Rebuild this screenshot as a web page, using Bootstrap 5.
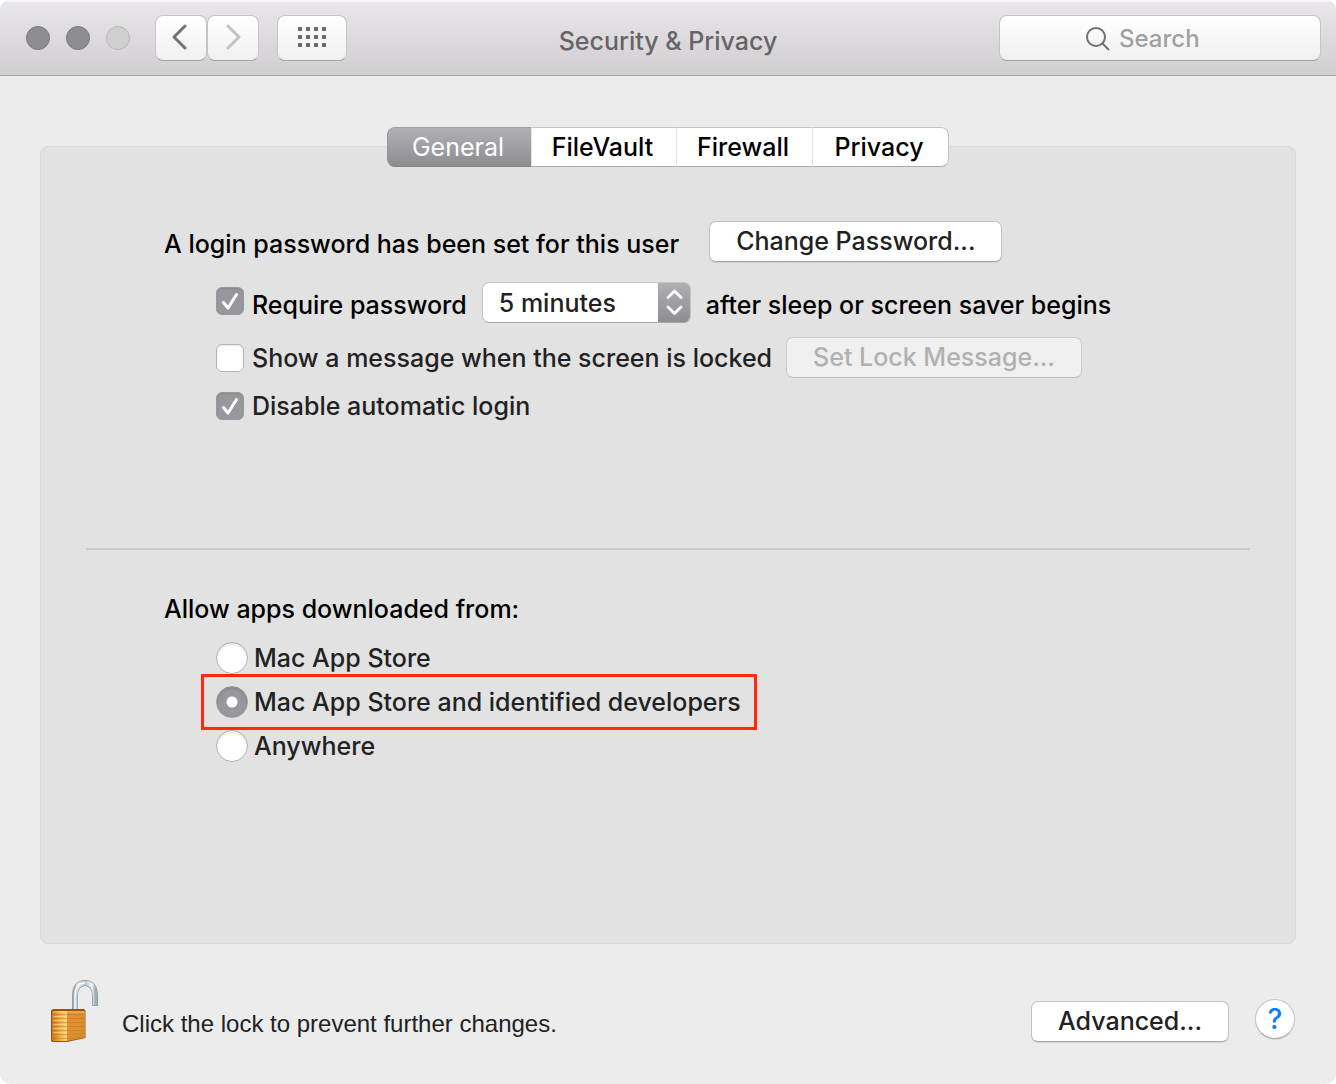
<!DOCTYPE html>
<html lang="en">
<head>
<meta charset="utf-8">
<meta name="viewport" content="width=device-width, initial-scale=1">
<title>Security &amp; Privacy</title>
<link href="https://cdn.jsdelivr.net/npm/bootstrap@5.3.0/dist/css/bootstrap.min.css" rel="stylesheet">
<style>
  body { background: #fff; color: #222; font: 450 25px/36px Inter, "Liberation Sans", sans-serif; }
  button, input, select { font-weight: 450; }
  .pref-window { background: #ececec; border-radius: 10px; overflow: hidden; }
  .titlebar { height: 76px; padding: 0 15px; background: linear-gradient(#e9e7ea, #d1ced2); border-bottom: 1px solid #a9a7aa; box-shadow: inset 0 2px #f4f3f5; }
  .side { flex: 1 1 0; }
  .win-dots { gap: 16px; margin: 0 25px 0 11px; }
  .win-dot { width: 24px; height: 24px; padding: 0; border-radius: 50%; border: 1px solid #77767b; background: #8e8d92; }
  .win-dot:disabled { border-color: #b5b4b6; background: #d0cfd0; }
  .tool, .search-box { height: 46px; border: 1px solid #c5c4c6; border-bottom-color: #a4a3a6; border-radius: 8px; background: linear-gradient(#fff, #f0f0f0); }
  .tool { width: 52px; padding: 0 5px 2px 0; display: flex; align-items: center; justify-content: center; }
  .tool + .tool { padding-right: 0; }
  .tool-wide { width: 70px; margin-left: 18px; }
  .window-title { font-size: 25px; line-height: 36px; color: #666467; padding-top: 6px; font-weight: 450; }
  .search-box { width: 322px; padding: 2px 36px 0 0; cursor: text; }
  .search-box input { width: 80px; padding: 0; border: 0; outline: 0; background: none; color: #444; font-size: 24px; }
  .search-box input::placeholder { color: #a09fa1; opacity: 1; }
  .pref-body { padding: 51px 40px 0; }
  .segments { margin-bottom: -21px; z-index: 1; }
  .segments button { height: 40px; padding: 0 3px 0 0; width: 136px; color: #000; background: #fff; border: 1px solid #c4c4c4; border-bottom-color: #a8a8a8; border-left-color: #e3e3e3; border-right-width: 0; line-height: 36px; }
  .segments button:nth-child(-n+2) { width: 145px; }
  .segments button:first-child { width: 144px; border-radius: 8px 0 0 8px; }
  .segments button:last-child { width: 137px; border-radius: 0 8px 8px 0; border-right: 1px solid #c4c4c4; }
  .segments button.active { color: #fff; font-weight: 400; border-color: #a09fa4 #949398 #828186; background: linear-gradient(#b1b0b5, #8d8c91); }
  .panel { background: #e2e2e2; border: 1px solid #d9d9d9; border-radius: 8px; padding: 74px 45px 0; }
  .group { padding-left: 78px; }
  .sub { padding-left: 52px; }
  .row-gap { padding-top: 14px; }
  .row-gap-sm { padding-top: 10px; }
  .login-row { gap: 30px; }
  .delay-row { gap: 15px; }
  .lock-row { gap: 14px; }
  .ink { color: #000; }
  .mac-btn { height: 41px; padding: 0 26px 2px; border: 1px solid #c4c4c4; border-bottom-color: #a9a9a9; border-radius: 7px; background: #fff; color: #222; line-height: 36px; box-shadow: 0 1px 1px #0000001a; white-space: nowrap; }
  .mac-btn:disabled { background: #f0f0f0; color: #b1b1b1; border-color: #cbcbcb; border-bottom-color: #bcbcbc; box-shadow: none; }
  .mac-check { appearance: none; flex: none; width: 28px; height: 28px; margin: 0; border: 1px solid #b5b5b5; border-radius: 6px; background: #fff center/28px 28px no-repeat; box-shadow: inset 0 1px 2px #0000001a; }
  .mac-check:checked { border-color: #98979c; background-color: #98979c; background-image: url("data:image/svg+xml,%3Csvg xmlns='http://www.w3.org/2000/svg' viewBox='0 0 28 28'%3E%3Cpath d='M7.5 15.5l4.5 5.500L20.500 7.500' fill='none' stroke='%23fff' stroke-width='3' stroke-linecap='round' stroke-linejoin='round'/%3E%3C/svg%3E"); }
  .mac-select { appearance: none; width: 209px; height: 41px; padding: 0 40px 0 16px; color: #222; border: 1px solid #c4c4c4; border-bottom-color: #a9a9a9; border-radius: 7px;
    background: url("data:image/svg+xml,%3Csvg xmlns='http://www.w3.org/2000/svg' viewBox='0 0 33 41'%3E%3Cdefs%3E%3ClinearGradient id='g' x2='0' y2='1'%3E%3Cstop stop-color='%23b1b0b5'/%3E%3Cstop offset='1' stop-color='%238d8c91'/%3E%3C/linearGradient%3E%3C/defs%3E%3Cpath fill='url(%23g)' d='M0 0h33v41H0z'/%3E%3Cpath d='M10 15.500l6.500-6.500 6.500 6.500M10 25l6.500 6.500 6.500-6.500' fill='none' stroke='%23fff' stroke-width='2.800' stroke-linecap='round' stroke-linejoin='round'/%3E%3C/svg%3E") right center/33px 41px no-repeat border-box #fff; }
  .divider { margin: 124px 0 41px; height: 2px; background: #cbcbcb; border: 0; opacity: 1; }
  .radios { padding: 9px 0 0 43px; }
  .choice { height: 44px; padding: 0 10px 0 9px; gap: 6px; }
  .choice.flagged { outline: 3px solid #ff2a0a; outline-offset: 3px; z-index: 1; }
  .mac-radio { appearance: none; flex: none; width: 32px; height: 32px; margin: 0; border: 1px solid #b3b3b3; border-radius: 50%; background: #fff; box-shadow: inset 0 2px 3px #0000001a; }
  .mac-radio:checked { border-color: #98979c; background: radial-gradient(circle, #fff 5px, #98979c 6px); }
  .bottom-bar { padding: 35px 1px 41px 10px; }
  .lock-note { font: 400 24px/38px "Liberation Sans", sans-serif; }
  .lock-btn { border: 0; padding: 0; background: none; line-height: 0; }
  .actions { gap: 26px; padding-bottom: 1px; }
  .help-btn { width: 40px; height: 40px; padding: 0; margin-bottom: 3px; border-radius: 50%; border: 1px solid #c4c4c4; border-bottom-color: #a9a9a9; background: #fff; color: #0a7cff; font-size: 28px; box-shadow: 0 1px 1px #0000001a; }
</style>
</head>
<body>
<div class="pref-window d-flex flex-column min-vh-100">
  <header class="titlebar d-flex align-items-center">
    <div class="side d-flex align-items-center">
      <div class="win-dots d-flex">
        <button class="win-dot" type="button" aria-label="Close"></button>
        <button class="win-dot" type="button" aria-label="Minimize"></button>
        <button class="win-dot" type="button" aria-label="Zoom" disabled></button>
      </div>
      <button class="tool" type="button" aria-label="Back">
        <svg width="16" height="26" viewBox="0 0 16 26" fill="none" stroke="#737275" stroke-width="3" stroke-linecap="round" stroke-linejoin="round"><path d="M14 2L3 13l11 11"/></svg>
      </button>
      <button class="tool" type="button" aria-label="Forward">
        <svg width="16" height="26" viewBox="0 0 16 26" fill="none" stroke="#c2c1c3" stroke-width="3" stroke-linecap="round" stroke-linejoin="round"><path d="M3 2l11 11L3 24"/></svg>
      </button>
      <button class="tool tool-wide" type="button" aria-label="Show all">
        <svg width="28" height="20" viewBox="0 0 28 20" fill="#6b6a6d"><path d="M0 0h4v4H0zM8 0h4v4H8zM16 0h4v4h-4zM24 0h4v4h-4zM0 8h4v4H0zM8 8h4v4H8zM16 8h4v4h-4zM24 8h4v4h-4zM0 16h4v4H0zM8 16h4v4H8zM16 16h4v4h-4zM24 16h4v4h-4z"/></svg>
      </button>
    </div>
    <h1 class="window-title mb-0">Security &amp; Privacy</h1>
    <div class="side d-flex justify-content-end">
      <label class="search-box d-flex align-items-center justify-content-center gap-2">
        <svg width="26" height="26" viewBox="0 0 26 26" fill="none" stroke="#6f6e71" stroke-width="2"><circle cx="11" cy="11" r="9"/><path d="M17.500 17.500L24 24"/></svg>
        <input type="text" placeholder="Search" aria-label="Search">
      </label>
    </div>
  </header>

  <main class="pref-body d-flex flex-column flex-grow-1">
    <div class="segments d-flex justify-content-center position-relative" role="tablist">
      <button class="active" type="button" role="tab" aria-selected="true">General</button>
      <button type="button" role="tab">FileVault</button>
      <button type="button" role="tab">Firewall</button>
      <button type="button" role="tab">Privacy</button>
    </div>

    <section class="panel flex-grow-1">
      <div class="group">
        <div class="login-row d-flex align-items-end ink">
          <span>A login password has been set for this user</span>
          <button class="mac-btn" type="button">Change Password...</button>
        </div>
        <div class="sub">
          <div class="delay-row d-flex align-items-end ink pt-3 mt-1">
            <label class="d-flex gap-2" for="req"><input class="mac-check" type="checkbox" id="req" checked>Require password</label>
            <select class="mac-select" aria-label="Delay"><option>5 minutes</option><option>15 minutes</option><option>1 hour</option></select>
            <label for="req">after sleep or screen saver begins</label>
          </div>
          <div class="lock-row row-gap d-flex align-items-center">
            <label class="d-flex align-items-center gap-2"><input class="mac-check" type="checkbox">Show a message when the screen is locked</label>
            <button class="mac-btn" type="button" disabled>Set Lock Message...</button>
          </div>
          <div class="row-gap-sm d-flex">
            <label class="d-flex align-items-center gap-2"><input class="mac-check" type="checkbox" checked>Disable automatic login</label>
          </div>
        </div>
      </div>
      <hr class="divider">
      <div class="group" role="radiogroup" aria-labelledby="allow">
        <div class="ink" id="allow">Allow apps downloaded from:</div>
        <div class="radios d-flex flex-column align-items-start">
          <label class="choice d-flex align-items-center"><input class="mac-radio" type="radio" name="src">Mac App Store</label>
          <label class="choice flagged position-relative d-flex align-items-center"><input class="mac-radio" type="radio" name="src" checked>Mac App Store and identified developers</label>
          <label class="choice d-flex align-items-center"><input class="mac-radio" type="radio" name="src">Anywhere</label>
        </div>
      </div>
    </section>

    <footer class="bottom-bar d-flex align-items-end">
      <button class="lock-btn me-4" type="button" aria-label="Lock">
        <svg width="48" height="64" viewBox="0 0 48 64">
          <defs>
            <linearGradient id="front"><stop stop-color="#c9761c"/><stop offset=".5" stop-color="#f0a83f"/><stop offset="1" stop-color="#ffd27a"/></linearGradient>
            <linearGradient id="right"><stop stop-color="#e0912c"/><stop offset="1" stop-color="#d98f30"/></linearGradient>
            <linearGradient id="steel"><stop stop-color="#a5b1b8"/><stop offset=".15" stop-color="#e8eff2"/><stop offset=".5" stop-color="#b9c4ca"/><stop offset=".85" stop-color="#f4f7f8"/><stop offset="1" stop-color="#a2afb6"/></linearGradient>
          </defs>
          <path d="M25 31V17C25 8 29 4 35 4s10 4 10 13v10" fill="none" stroke="#8b989f" stroke-width="6"/>
          <path d="M25 31V17C25 8 29 4 35 4s10 4 10 13v9.500" fill="none" stroke="url(#steel)" stroke-width="4.500"/>
          <path d="M25 30V17C25 8 29 4 35 4" fill="none" stroke="#fafcfd" stroke-width="1.500"/>
          <path d="M1 31.500L3 30h31l1.500 1.500v27.500L17 63H2l-1-1z" fill="#9a5410"/>
          <path d="M2 32h15v30H3l-1-1z" fill="url(#front)"/>
          <path d="M17 32h18v26.500L17 62z" fill="url(#right)"/>
          <path d="M2 35.500h33M2 39.500h33M2 43.500h33M2 47.500h33M2 51.500h33M2 55.500h15l18-1M2 59.500h15l18-2" stroke="#b5701f" stroke-opacity=".4" fill="none"/>
          <path d="M3 33h31M3 37.500h14M3 41.500h14M3 45.500h14M3 49.500h14M3 53.500h14" stroke="#ffe0a0" stroke-opacity=".6" fill="none"/>
        </svg>
      </button>
      <span class="lock-note">Click the lock to prevent further changes.</span>
      <div class="actions d-flex align-items-end ms-auto">
        <button class="mac-btn" type="button">Advanced...</button>
        <button class="help-btn" type="button" aria-label="Help">?</button>
      </div>
    </footer>
  </main>
</div>
<script src="https://cdn.jsdelivr.net/npm/bootstrap@5.3.0/dist/js/bootstrap.bundle.min.js"></script>
</body>
</html>
